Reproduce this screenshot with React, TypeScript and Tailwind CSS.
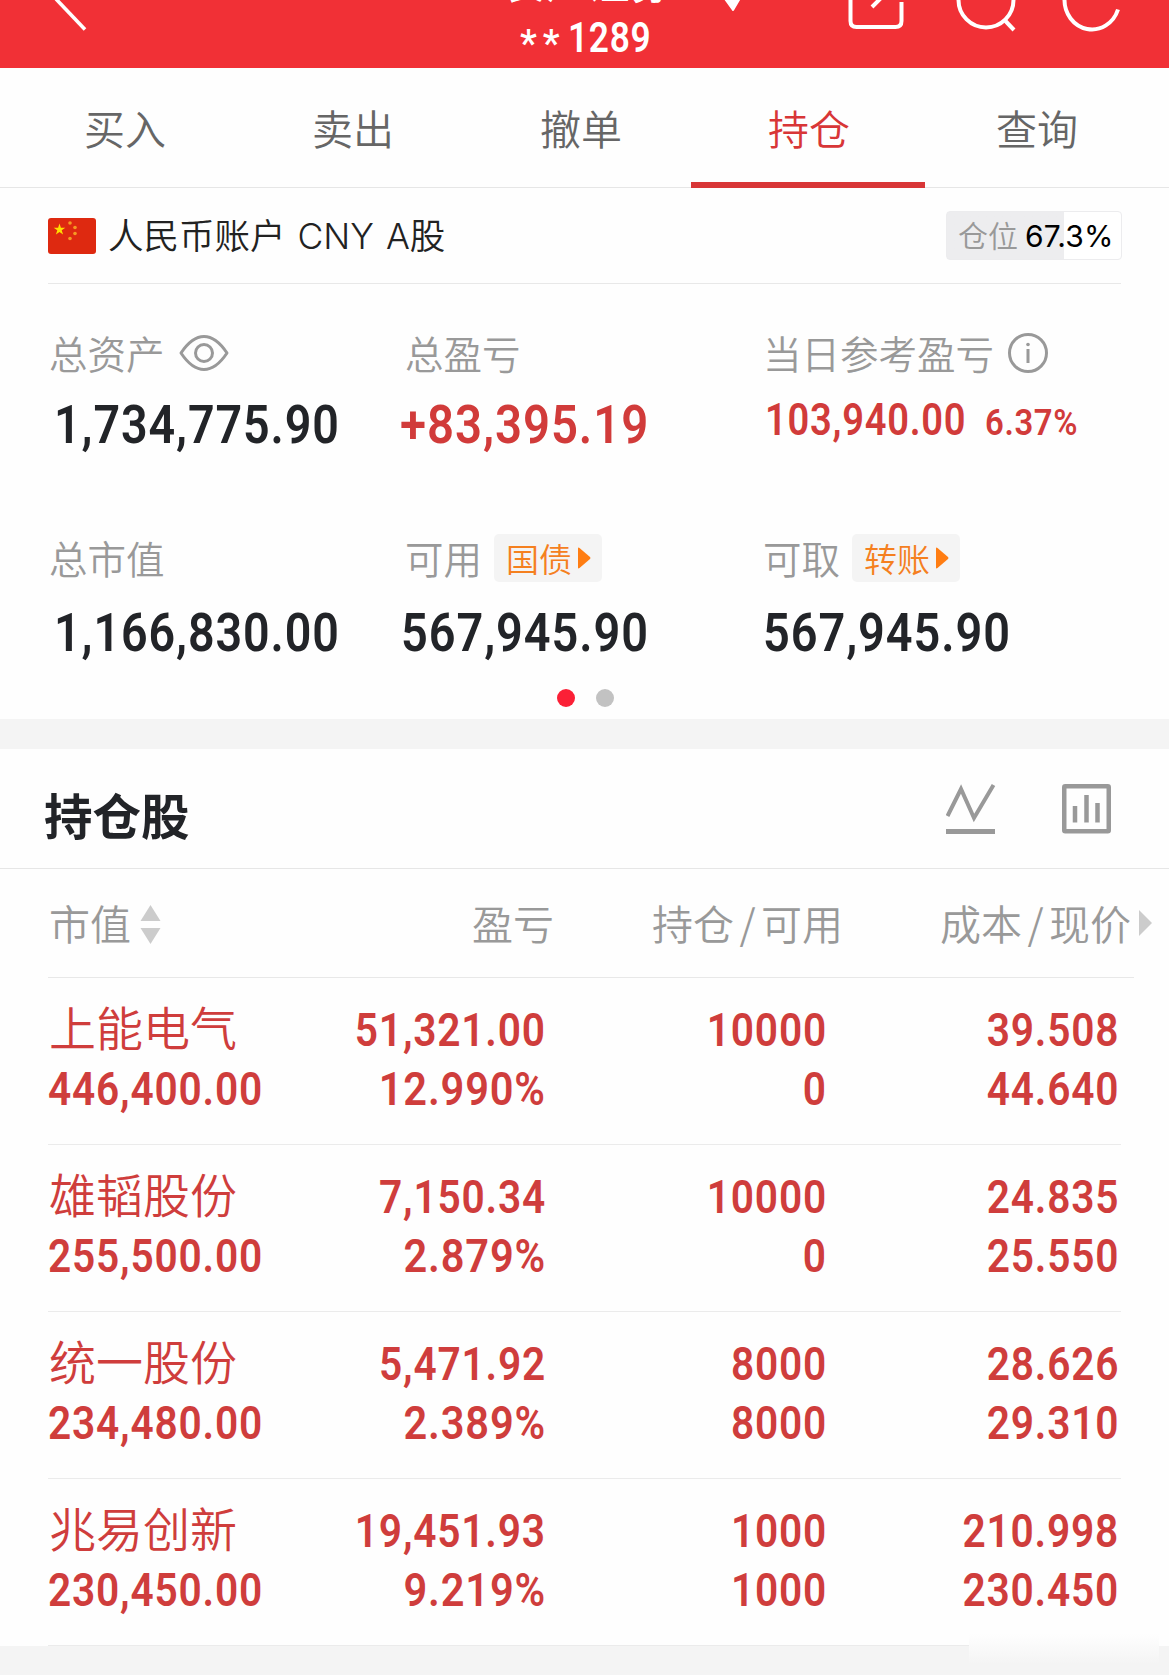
import React from "react";
import clsx from "clsx";

const tabs = ["买入", "卖出", "撤单", "持仓", "查询"];

const holdings = [
  { name: "上能电气", value: "446,400.00", profit: "51,321.00", rate: "12.990%", total: "10000", usable: "0", cost: "39.508", price: "44.640" },
  { name: "雄韬股份", value: "255,500.00", profit: "7,150.34", rate: "2.879%", total: "10000", usable: "0", cost: "24.835", price: "25.550" },
  { name: "统一股份", value: "234,480.00", profit: "5,471.92", rate: "2.389%", total: "8000", usable: "8000", cost: "28.626", price: "29.310" },
  { name: "兆易创新", value: "230,450.00", profit: "19,451.93", rate: "9.219%", total: "1000", usable: "1000", cost: "210.998", price: "230.450" }
];

function Num({ children, className }: { children: React.ReactNode; className?: string }) {
  return <span className={clsx("block w-max font-['Roboto',sans-serif] font-semibold tracking-[.02em] whitespace-nowrap", className)}>{children}</span>;
}

function Header() {
  return <header className="flex h-[68px] items-start overflow-hidden bg-[#f13036] text-white">
      <svg className="ml-[48px] h-[34px] w-[44px]" viewBox="0 0 44 34" fill="none" stroke="currentColor" strokeWidth="3.6">
        <path d="M8 -1 37 29.500" />
      </svg>
      <div className="ml-[410px] flex w-[166px] flex-col">
        <div className="-mt-[29px] flex h-[20px] items-center text-[42.500px] leading-[20px] font-medium whitespace-nowrap">长江证券</div>
        <div className="mt-[23px] ml-[18px] flex h-[48px] items-center">
          <span className="relative top-[6px] w-[48px] font-['Roboto',sans-serif] text-[38px] leading-[48px] font-medium tracking-[6px]">**</span>
          <Num className="origin-left scale-x-[.84] text-[42px] leading-[48px]">1289</Num>
        </div>
      </div>
      <svg className="ml-[54px] h-[12px] w-[22px]" viewBox="0 0 22 12" fill="currentColor">
        <path d="M-1 -5H21L12.500 9.500Q11 12.500 9.500 9.500Z" />
      </svg>
      <svg className="ml-[104px] h-[34px] w-[58px]" viewBox="0 0 58 34" fill="none" stroke="currentColor" strokeWidth="4">
        <path d="M2.500 -2V21Q2.500 27 8.500 27H47.500Q53.500 27 53.500 21V2M24 7 34 -3" />
      </svg>
      <svg className="ml-[49px] h-[34px] w-[62px]" viewBox="0 0 62 34" fill="none" stroke="currentColor" strokeWidth="4">
        <circle cx="31" cy="0" r="27.500" />
        <path d="M49.500 20 59 30" />
      </svg>
      <svg className="ml-[44px] h-[34px] w-[62px]" viewBox="0 0 62 34" fill="none" stroke="currentColor" strokeWidth="4">
        <path d="M3.500 -1A27.500 29.500 0 0 0 57 9.500" />
      </svg>
    </header>;
}

function Tabs() {
  return <nav className="flex h-[120px] border-b border-[#e6e6e6] pl-[11px]">
      {tabs.map(tab => <div key={tab} className={clsx("relative flex w-[228px] justify-center pt-[29px] text-[41px] leading-[60px]", tab === "持仓" ? "text-[#d83637]" : "text-[#666666]")}>
          {tab}
          {tab === "持仓" && <span className="absolute -bottom-px -left-[4px] h-[6px] w-[234px] bg-[#d83637]" />}
        </div>)}
    </nav>;
}

function Flag() {
  return <svg className="h-[36px] w-[48px]" viewBox="0 0 48 36">
      <rect width="48" height="36" rx="3" fill="#de2910" />
      <path fill="#ffde00" d="M11.500 5.500 12.900 9.700H17.300L13.700 12.300 15.100 16.500 11.500 13.900 7.900 16.500 9.300 12.300 5.700 9.700H10.100Z" />
      <g fill="#f59a23">
        <circle cx="22" cy="5" r="1.800" />
        <circle cx="27" cy="9.500" r="1.800" />
        <circle cx="27" cy="15.500" r="1.800" />
        <circle cx="22" cy="20.500" r="1.800" />
      </g>
    </svg>;
}

function AccountBar() {
  return <div className="mx-[48px] flex h-[96px] items-center justify-between border-b border-[#e8e8e8]">
      <div className="flex items-center">
        <Flag />
        <span className="mt-[2px] ml-[12px] font-['Inter','Noto_Sans_CJK_SC',sans-serif] text-[35.500px] leading-[50px] [word-spacing:2px] text-[#222222]">人民币账户 CNY A股</span>
      </div>
      <div className="-mr-px flex h-[49px] w-[176px] items-center rounded-[4px] border border-[#ececee] bg-linear-to-r from-[#ededef] from-67% to-white to-67% pl-[11px] font-['Inter','Noto_Sans_CJK_SC',sans-serif] text-[30px] leading-[46px] whitespace-nowrap">
        <span className="text-[#999999]">仓位</span>
        <span className="ml-[7px] text-[30px] font-normal tracking-[.2px] text-black">67.3%</span>
      </div>
    </div>;
}

function Chip({ children }: { children: React.ReactNode }) {
  return <span className="ml-[12px] flex h-[48px] w-[108px] items-center rounded-[5px] bg-[#f4f4f4] pl-[12px] text-[33px] leading-[44px] text-[#f5801f]">
      {children}
      <svg className="ml-[6px] h-[22px] w-[13px]" viewBox="0 0 13 22" fill="#ff7d12">
        <path d="M0 1.500Q0 0 1.500 1L12 10Q13 11 12 12L1.500 21Q0 22 0 20.500Z" />
      </svg>
    </span>;
}

function Summary() {
  return <section className="h-[435px]">
      <div className="grid h-[206px] grid-cols-[356px_358px_1fr] pt-[42px] pl-[49px] text-[38.500px] text-[#999999]">
        <div>
          <div className="flex h-[54px] items-center">
            总资产
            <svg className="ml-[14px] h-[38px] w-[50px]" viewBox="0 0 50 38" fill="none" stroke="#999999" strokeWidth="3">
              <path d="M2 19C10 7 17 2.500 25 2.500S40 7 48 19C40 31 33 35.500 25 35.500S10 31 2 19Z" strokeLinejoin="round" />
              <circle cx="25" cy="19" r="8.500" />
            </svg>
          </div>
          <Num className="mt-[12px] ml-[5px] origin-left scale-x-[.855] text-[54.500px] leading-[64px] text-[#222428]">1,734,775.90</Num>
        </div>
        <div>
          <div className="flex h-[54px] items-center">总盈亏</div>
          <Num className="mt-[12px] -ml-[5px] origin-left scale-x-[.868] text-[54.500px] leading-[64px] text-[#d13b3a]">+83,395.19</Num>
        </div>
        <div>
          <div className="flex h-[54px] items-center">
            当日参考盈亏
            <svg className="ml-[13px] h-[42px] w-[42px]" viewBox="0 0 42 42" fill="none" stroke="#999999" strokeWidth="3">
              <circle cx="21" cy="21" r="18.500" />
              <path d="M21 17V31" />
              <circle cx="21" cy="12.500" r="1.800" fill="#999999" stroke="none" />
            </svg>
          </div>
          <div className="mt-[10px] ml-[2px] flex items-baseline text-[#d13b3a]">
            <Num className="origin-left scale-x-[.855] text-[44.500px] leading-[60px]">103,940.00</Num>
            <Num className="-ml-[15px] origin-left scale-x-[.9] text-[36.500px] leading-[60px]">6.37%</Num>
          </div>
        </div>
      </div>
      <div className="grid h-[190px] grid-cols-[356px_358px_1fr] pt-[41px] pl-[49px] text-[38.500px] text-[#999999]">
        <div>
          <div className="flex h-[54px] items-center">总市值</div>
          <Num className="mt-[15px] ml-[5px] origin-left scale-x-[.855] text-[54.500px] leading-[64px] text-[#222428]">1,166,830.00</Num>
        </div>
        <div>
          <div className="flex h-[54px] items-center">可用<Chip>国债</Chip></div>
          <Num className="mt-[15px] -ml-[4px] origin-left scale-x-[.86] text-[54.500px] leading-[64px] text-[#222428]">567,945.90</Num>
        </div>
        <div>
          <div className="flex h-[54px] items-center">可取<Chip>转账</Chip></div>
          <Num className="mt-[15px] origin-left scale-x-[.86] text-[54.500px] leading-[64px] text-[#222428]">567,945.90</Num>
        </div>
      </div>
      <div className="ml-[557px] flex gap-[21px] pt-[9px]">
        <span className="h-[18px] w-[18px] rounded-full bg-[#fb2036]" />
        <span className="h-[18px] w-[18px] rounded-full bg-[#c2c2c2]" />
      </div>
    </section>;
}

function HoldingsTitle() {
  return <div className="flex h-[120px] items-start border-b border-[#e6e6e6] pl-[44px]">
      <h2 className="w-[902px] pt-[30px] text-[48.500px] leading-[70px] font-bold text-[#222428]">持仓股</h2>
      <svg className="mt-[34px] h-[52px] w-[50px]" viewBox="0 0 50 52" fill="none" stroke="#999999">
        <path d="M1.500 33 15 6 28 35 47.500 2" strokeWidth="4" />
        <path d="M0 48.500H49" strokeWidth="5" />
      </svg>
      <svg className="mt-[34px] ml-[66px] h-[52px] w-[50px]" viewBox="0 0 50 52" fill="none" stroke="#999999" strokeWidth="4.500">
        <rect x="2.250" y="3.250" width="44.500" height="45" rx="1" />
        <path d="M13 23V39.500M24.500 12V39.500M35.500 20V39.500" />
      </svg>
    </div>;
}

function TableHead() {
  return <div className="ml-[48px] flex h-[109px] w-[1086px] items-start border-b border-[#e8e8e8] pt-[23px] text-[41px] leading-[60px] whitespace-nowrap text-[#999999]">
      <div className="flex w-[200px] shrink-0 items-center">
        <span className="ml-px">市值</span>
        <svg className="mt-[4px] ml-[9px] h-[40px] w-[21px]" viewBox="0 0 21 40" fill="#cccccc">
          <path d="M10.500 1 20.500 17H.5ZM.5 24H20.500L10.500 40Z" />
        </svg>
      </div>
      <div className="w-[306px] shrink-0 text-right">盈亏</div>
      <div className="flex w-[289px] shrink-0 justify-end">持仓<span className="mx-[5.500px]">/</span>可用</div>
      <div className="flex w-[288px] shrink-0 justify-end">成本<span className="mx-[5.500px]">/</span>现价</div>
      <svg className="mt-[18px] ml-[8px] h-[26px] w-[13px] shrink-0" viewBox="0 0 12 24" fill="#cccccc">
        <path d="M0 0 12 12 0 24Z" />
      </svg>
    </div>;
}

function Pair({ top, bottom }: { top: string; bottom: string }) {
  return <div className="flex flex-col items-end">
      <Num className="origin-right scale-x-[.865]">{top}</Num>
      <Num className={clsx("origin-right", bottom.endsWith("%") ? "scale-x-[.885]" : "scale-x-[.865]")}>{bottom}</Num>
    </div>;
}

export default function App() {
  return <div className="h-[1675px] w-[1169px] overflow-hidden bg-[#fefefe] font-['Noto_Sans_CJK_SC',sans-serif] font-[350]">
      <Header />
      <Tabs />
      <AccountBar />
      <Summary />
      <div className="h-[30px] bg-[#f4f4f4]" />
      <HoldingsTitle />
      <TableHead />
      {holdings.map(item => <div key={item.name} className="mx-[48px] grid h-[167px] grid-cols-[230px_268px_281px_292px] border-b border-[#ebebeb] pt-[22px] text-[47px] leading-[59px] text-[#cf3d3c]">
          <div>
            <div className="-mt-[4px] mb-[4px] ml-px">{item.name}</div>
            <Num className="origin-left scale-x-[.865]">{item.value}</Num>
          </div>
          <Pair top={item.profit} bottom={item.rate} />
          <Pair top={item.total} bottom={item.usable} />
          <Pair top={item.cost} bottom={item.price} />
        </div>)}
      <div className="flex h-[31px] justify-end bg-[#f4f4f4] pr-[10px]">
        <div className="-mt-[12px] h-[30px] w-[190px] bg-linear-to-b from-[#fefefe] to-[#f4f4f4]" />
      </div>
    </div>;
}
